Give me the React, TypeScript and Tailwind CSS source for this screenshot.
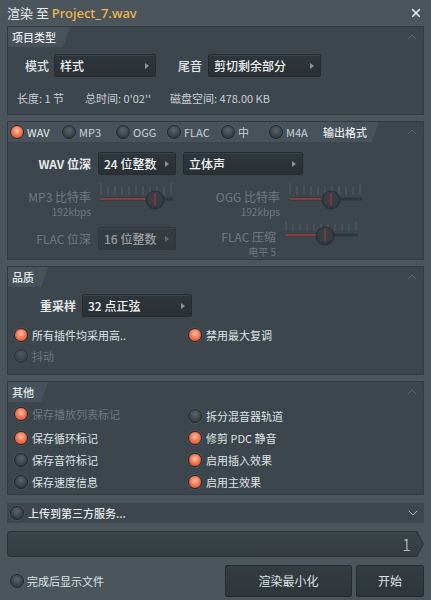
import { X, ChevronUp, ChevronDown } from "lucide-react";

const font = "font-['Noto_Sans_CJK_SC','Liberation_Sans',sans-serif]";

function Radio({ on, dim }: { on?: boolean; dim?: boolean }) {
  return (
    <span
      className={
        "inline-block h-[14px] w-[14px] shrink-0 rounded-full border border-[#23292d] shadow-[0_0_0_1px_#56616866] " +
        (on
          ? "bg-[radial-gradient(circle_at_50%_40%,#ffc2a4_0%,#f47a58_45%,#c9401f_100%)]"
          : "bg-[radial-gradient(circle_at_50%_35%,#5a646a_0%,#3b4348_60%,#2b3236_100%)]") +
        (dim ? " opacity-60" : "")
      }
    />
  );
}

function Drop({ label, w, dim }: { label: string; w: string; dim?: boolean }) {
  return (
    <div
      className={
        "flex h-[23px] items-center justify-between rounded-[2px] border border-[#262c30] bg-gradient-to-b from-[#30373c] to-[#2a3034] pl-[5px] pr-[6px] shadow-[inset_0_1px_0_#3a4348] " +
        w +
        (dim ? " opacity-50" : "")
      }
    >
      <span className="whitespace-nowrap text-[12px] font-medium text-[#eef1f2]">{label}</span>
      <span className="h-0 w-0 border-y-[3.5px] border-l-[4px] border-y-transparent border-l-[#8b959b]" />
    </div>
  );
}

function Slider({ knob, tickH = 12 }: { knob: number; tickH?: number }) {
  const ticks = Array.from({ length: 11 }, (_, i) => 2 + i * 7);
  return (
    <svg width="78" height="30" viewBox="0 0 78 30" className="opacity-70">
      {ticks.map((x, i) => (
        <line
          key={i}
          x1={x}
          x2={x}
          y1={i === 0 || i === 10 ? 0 : 3}
          y2={tickH}
          stroke="#5e696f"
          strokeWidth="1"
        />
      ))}
      <line x1="2" x2="74" y1={tickH + 4} y2={tickH + 4} stroke="#2a3135" strokeWidth="3" />
      <line x1="2" x2={knob} y1={tickH + 4} y2={tickH + 4} stroke="#b2353a" strokeWidth="2" />
      <circle cx={knob} cy={tickH + 5} r="9" fill="#2b3236" stroke="#20262a" />
      <circle cx={knob} cy={tickH + 4} r="7.5" fill="#353d42" />
      <line x1={knob} x2={knob} y1={tickH - 2} y2={tickH + 10} stroke="#c0353a" strokeWidth="1.3" />
    </svg>
  );
}

function Panel({
  title,
  h,
  children,
}: {
  title: string;
  h: string;
  children: React.ReactNode;
}) {
  return (
    <div className={"flex flex-col border border-[#343c41] bg-[#3d464c] " + h}>
      <div className="flex h-[20px] shrink-0 items-center justify-between">
        <div className="flex h-full items-center whitespace-nowrap bg-[#48525a] pl-[4px] pr-[14px] text-[11px] font-medium text-[#e4e8ea] [clip-path:polygon(0_0,100%_0,calc(100%-7px)_100%,0_100%)]">
          {title}
        </div>
        <ChevronUp className="mr-[2px] h-[16px] w-[18px] text-[#5d686e]" strokeWidth={1.5} />
      </div>
      {children}
    </div>
  );
}

function Opt({
  on,
  label,
  dim,
  dimText,
}: {
  on?: boolean;
  label: string;
  dim?: boolean;
  dimText?: boolean;
}) {
  return (
    <div className="flex h-[16px] items-center gap-[4px]">
      <Radio on={on} dim={dim} />
      <span
        className={
          "whitespace-nowrap text-[11px] " +
          (dim || dimText ? "text-[#6e797f]" : "text-[#dfe3e6]")
        }
      >
        {label}
      </span>
    </div>
  );
}

function Fmt({ on, label, w }: { on?: boolean; label: string; w: string }) {
  return (
    <div className={"flex items-center gap-[3px] " + w}>
      <Radio on={on} />
      <span className={on ? "text-[#e4e8ea]" : "text-[#c9d0d4]"}>{label}</span>
    </div>
  );
}

export default function App() {
  return (
    <div className={"flex h-[600px] w-[431px] flex-col bg-[#4b555c] px-[7px] " + font}>
      {/* title */}
      <div className="flex h-[26px] items-center justify-between">
        <span className="text-[13px] text-[#e3e6e8]">
          渲染 至{" "}
          <span className="font-['Noto_Sans',sans-serif] font-medium text-[#f2b54d]">
            Project_7.wav
          </span>
        </span>
        <X className="mr-[1px] h-[14px] w-[14px] text-[#e8ebed]" strokeWidth={2.6} />
      </div>

      {/* 项目类型 */}
      <Panel title="项目类型" h="h-[89px]">
        <div className="mt-[7px] flex items-center">
          <span className="ml-[17px] text-[12px] font-medium text-[#dfe3e6]">模式</span>
          <div className="ml-[5px]">
            <Drop label="样式" w="w-[102px]" />
          </div>
          <span className="ml-[22px] text-[12px] font-medium text-[#dfe3e6]">尾音</span>
          <div className="ml-[6px]">
            <Drop label="剪切剩余部分" w="w-[113px]" />
          </div>
        </div>
        <div className="mt-[13px] flex text-[11px] text-[#c9d0d4]">
          <span className="ml-[9px] w-[68px]">长度: 1 节</span>
          <span className="w-[85px]">总时间: 0'02''</span>
          <span>磁盘空间: 478.00 KB</span>
        </div>
      </Panel>

      {/* 输出格式 */}
      <div className="mt-[6px] flex h-[139px] flex-col border border-[#343c41] bg-[#3d464c]">
        <div className="flex h-[20px] shrink-0 items-center justify-between">
          <div className="flex h-full w-[371px] items-center whitespace-nowrap bg-[#48525a] pl-[2px] text-[11px] [clip-path:polygon(0_0,100%_0,calc(100%-7px)_100%,0_100%)]">
            <Fmt on label="WAV" w="w-[52px]" />
            <Fmt label="MP3" w="w-[54px]" />
            <Fmt label="OGG" w="w-[51px]" />
            <Fmt label="FLAC" w="w-[54px]" />
            <Fmt label="中" w="w-[48px]" />
            <Fmt label="M4A" w="w-[54px]" />
            <span className="font-medium text-[#e4e8ea]">输出格式</span>
          </div>
          <ChevronUp className="mr-[2px] h-[16px] w-[18px] text-[#5d686e]" strokeWidth={1.5} />
        </div>

        <div className="mt-[10px] flex items-center">
          <span className="w-[83px] text-right text-[12px] font-semibold text-[#e4e8ea]">WAV 位深</span>
          <div className="ml-[7px]">
            <Drop label="24 位整数" w="w-[78px]" />
          </div>
          <div className="ml-[7px]">
            <Drop label="立体声" w="w-[120px]" />
          </div>
        </div>

        <div className="mt-[8px] flex h-[32px] items-start">
          <div className="mt-[6px] flex w-[83px] flex-col items-end leading-[15px]">
            <span className="text-[12px] text-[#6f7a80]">MP3 比特率</span>
            <span className="text-[10px] text-[#6f7a80]">192kbps</span>
          </div>
          <div className="ml-[8px]">
            <Slider knob={56} />
          </div>
          <div className="ml-[14px] mt-[6px] flex w-[89px] flex-col items-end leading-[15px]">
            <span className="text-[12px] text-[#6f7a80]">OGG 比特率</span>
            <span className="text-[10px] text-[#6f7a80]">192kbps</span>
          </div>
          <div className="ml-[8px]">
            <Slider knob={43} />
          </div>
        </div>

        <div className="mt-[12px] flex items-start">
          <div className="flex items-center">
            <span className="w-[83px] text-right text-[12px] text-[#6f7a80]">FLAC 位深</span>
            <div className="ml-[7px]">
              <Drop label="16 位整数" w="w-[78px]" dim />
            </div>
          </div>
          <div className="ml-[11px] mt-[2px] flex w-[89px] flex-col items-end leading-[15px]">
            <span className="text-[12px] text-[#6f7a80]">FLAC 压缩</span>
            <span className="text-[10px] text-[#6f7a80]">电平 5</span>
          </div>
          <div className="-mt-[6px] ml-[8px]">
            <Slider knob={41} tickH={10} />
          </div>
        </div>
      </div>

      {/* 品质 */}
      <div className="mt-[6px]">
        <Panel title="品质" h="h-[109px]">
          <div className="mt-[7px] flex items-center">
            <span className="w-[68px] text-right text-[12px] font-semibold text-[#e4e8ea]">重采样</span>
            <div className="ml-[6px]">
              <Drop label="32 点正弦" w="w-[110px]" />
            </div>
          </div>
          <div className="mt-[10px] flex pl-[6px]">
            <div className="w-[174px]">
              <Opt on label="所有插件均采用高.." />
            </div>
            <Opt on label="禁用最大复调" />
          </div>
          <div className="mt-[5px] pl-[6px]">
            <Opt label="抖动" dim />
          </div>
        </Panel>
      </div>

      {/* 其他 */}
      <div className="mt-[6px]">
        <Panel title="其他" h="h-[114px]">
          <div className="mt-[6px] grid grid-cols-[174px_1fr] gap-y-[6px] pl-[6px]">
            <div className="-mt-[2px]">
              <Opt on label="保存播放列表标记" dimText />
            </div>
            <Opt label="拆分混音器轨道" />
            <Opt on label="保存循环标记" />
            <Opt on label="修剪 PDC 静音" />
            <Opt label="保存音符标记" />
            <Opt on label="启用插入效果" />
            <Opt label="保存速度信息" />
            <Opt on label="启用主效果" />
          </div>
        </Panel>
      </div>

      {/* upload */}
      <div className="mt-[8px] flex h-[20px] items-center justify-between bg-[#3d464c] pl-[3px]">
        <div className="flex items-center gap-[4px]">
          <Radio />
          <span className="text-[11px] font-medium text-[#e4e8ea]">上传到第三方服务...</span>
        </div>
        <ChevronDown className="mr-[2px] h-[16px] w-[18px] text-[#aeb6bb]" strokeWidth={1.5} />
      </div>

      {/* progress */}
      <div className="mt-[8px] h-[26px] rounded-l-[4px] bg-[#2c3337] [clip-path:polygon(0_0,calc(100%-7px)_0,100%_50%,calc(100%-7px)_100%,0_100%)]">
        <div className="m-[1px] flex h-[24px] items-center justify-end rounded-l-[3px] bg-gradient-to-b from-[#3b4449] to-[#353d42] pr-[12px] [clip-path:polygon(0_0,calc(100%-7px)_0,100%_50%,calc(100%-7px)_100%,0_100%)]">
          <span className="text-[17px] font-light text-[#c3cacd]">1</span>
        </div>
      </div>

      {/* bottom */}
      <div className="mt-[8px] flex items-center">
        <div className="ml-[3px] flex items-center gap-[3px]">
          <Radio />
          <span className="text-[11px] text-[#dfe3e6]">完成后显示文件</span>
        </div>
        <button className="ml-auto flex h-[32px] w-[127px] items-center justify-center rounded-[2px] border border-[#262c30] bg-gradient-to-b from-[#353d42] to-[#2f363a] text-[12px] text-[#dfe3e6]">
          渲染最小化
        </button>
        <button className="ml-[4px] flex h-[32px] w-[68px] items-center justify-center rounded-[2px] border border-[#262c30] bg-gradient-to-b from-[#353d42] to-[#2f363a] text-[12px] text-[#dfe3e6]">
          开始
        </button>
      </div>
    </div>
  );
}
